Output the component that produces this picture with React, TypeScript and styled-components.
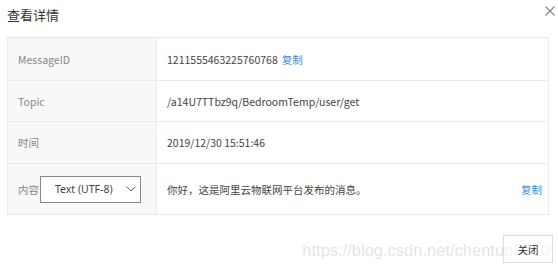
import styled, { createGlobalStyle } from "styled-components";

const GlobalStyle = createGlobalStyle`
  html, body {
    margin: 0;
    padding: 0;
    background: #fff;
  }
  body {
    font-family: "Noto Sans CJK SC", "Noto Sans", sans-serif;
  }
`;

type Row = {
  label: string;
  value: string;
  height: number;
  copy?: boolean;
};

const rows: Row[] = [
  { label: "MessageID", value: "1211555463225760768", height: 42, copy: true },
  { label: "Topic", value: "/a14U7TTbz9q/BedroomTemp/user/get", height: 40 },
  { label: "时间", value: "2019/12/30 15:51:46", height: 41 },
];

export default function App() {
  return (
    <>
      <GlobalStyle />
      <Dialog>
        <Header>
          <Title>查看详情</Title>
          <CloseIcon viewBox="0 0 10 10" aria-label="close">
            <path d="M0.5 0.5 L9.5 9.5 M9.5 0.5 L0.5 9.5" stroke="#888" strokeWidth="1.2" />
          </CloseIcon>
        </Header>
        <Table>
          {rows.map((r) => (
            <TableRow key={r.label} $h={r.height}>
              <LabelCell>{r.label}</LabelCell>
              <ValueCell>
                <Value>{r.value}</Value>
                {r.copy && <CopyLink>复制</CopyLink>}
              </ValueCell>
            </TableRow>
          ))}
          <TableRow $h={50}>
            <LabelCell>
              内容
              <Select>
                <span>Text (UTF-8)</span>
                <Chevron viewBox="0 0 10 6">
                  <path d="M0.5 0.5 L5 5 L9.5 0.5" fill="none" stroke="#666" strokeWidth="1" />
                </Chevron>
              </Select>
            </LabelCell>
            <ValueCell>
              <Value>你好，这是阿里云物联网平台发布的消息。</Value>
              <CopyLink $right>复制</CopyLink>
            </ValueCell>
          </TableRow>
        </Table>
        <Footer>
          <Watermark>https://blog.csdn.net/chentup2010</Watermark>
          <Button>关闭</Button>
        </Footer>
      </Dialog>
    </>
  );
}

const Dialog = styled.div`
  width: 558px;
  height: 267px;
  box-sizing: border-box;
  padding: 0 9px 0 7px;
  display: flex;
  flex-direction: column;
`;

const Header = styled.div`
  height: 37px;
  display: flex;
  align-items: flex-start;
  justify-content: space-between;
`;

const Title = styled.h2`
  margin: 6px 0 0;
  font-size: 13px;
  font-weight: 400;
  line-height: 18px;
  color: #333;
`;

const CloseIcon = styled.svg`
  width: 10px;
  height: 10px;
  margin: 6px -6px 0 0;
`;

const Table = styled.div`
  display: flex;
  flex-direction: column;
  border: 1px solid #eaeaea;
`;

const TableRow = styled.div<{ $h: number }>`
  display: grid;
  grid-template-columns: 149px 1fr;
  height: ${({ $h }) => $h}px;
  & + & {
    border-top: 1px solid #eaeaea;
  }
`;

const LabelCell = styled.div`
  display: flex;
  align-items: center;
  gap: 1px;
  padding-left: 10px;
  background: #f8f8f8;
  border-right: 1px solid #eaeaea;
  font-size: 10.5px;
  color: #888;
`;

const ValueCell = styled.div`
  display: flex;
  align-items: center;
  padding: 0 6px 0 10px;
  font-size: 10.5px;
  color: #444;
`;

const Value = styled.span`
  white-space: nowrap;
`;

const CopyLink = styled.a<{ $right?: boolean }>`
  margin-left: ${({ $right }) => ($right ? "auto" : "4px")};
  color: #2a8ce5;
  font-size: 10.5px;
  cursor: pointer;
`;

const Select = styled.div`
  width: 101px;
  height: 27px;
  box-sizing: border-box;
  border: 1px solid #888;
  background: #fff;
  display: flex;
  align-items: center;
  justify-content: space-between;
  padding: 0 4px 0 14px;
  font-family: "Noto Sans", sans-serif;
  font-size: 10.5px;
  color: #444;
`;

const Chevron = styled.svg`
  width: 10px;
  height: 6px;
`;

const Footer = styled.div`
  position: relative;
  flex: 1;
  display: flex;
  justify-content: flex-end;
  align-items: flex-start;
  padding-top: 20px;
`;

const Watermark = styled.span`
  position: absolute;
  right: -1px;
  top: 26px;
  font-family: "Liberation Sans", Arial, sans-serif;
  font-size: 16.5px;
  color: rgba(195, 195, 195, 0.45);
  white-space: nowrap;
  pointer-events: none;
`;

const Button = styled.button`
  position: relative;
  width: 50px;
  height: 28px;
  margin-right: -4px;
  border: 1px solid #ddd;
  background: rgba(255, 255, 255, 0.6);
  font-family: "Noto Sans CJK SC", sans-serif;
  font-size: 10.5px;
  color: #333;
  padding: 0;
`;
